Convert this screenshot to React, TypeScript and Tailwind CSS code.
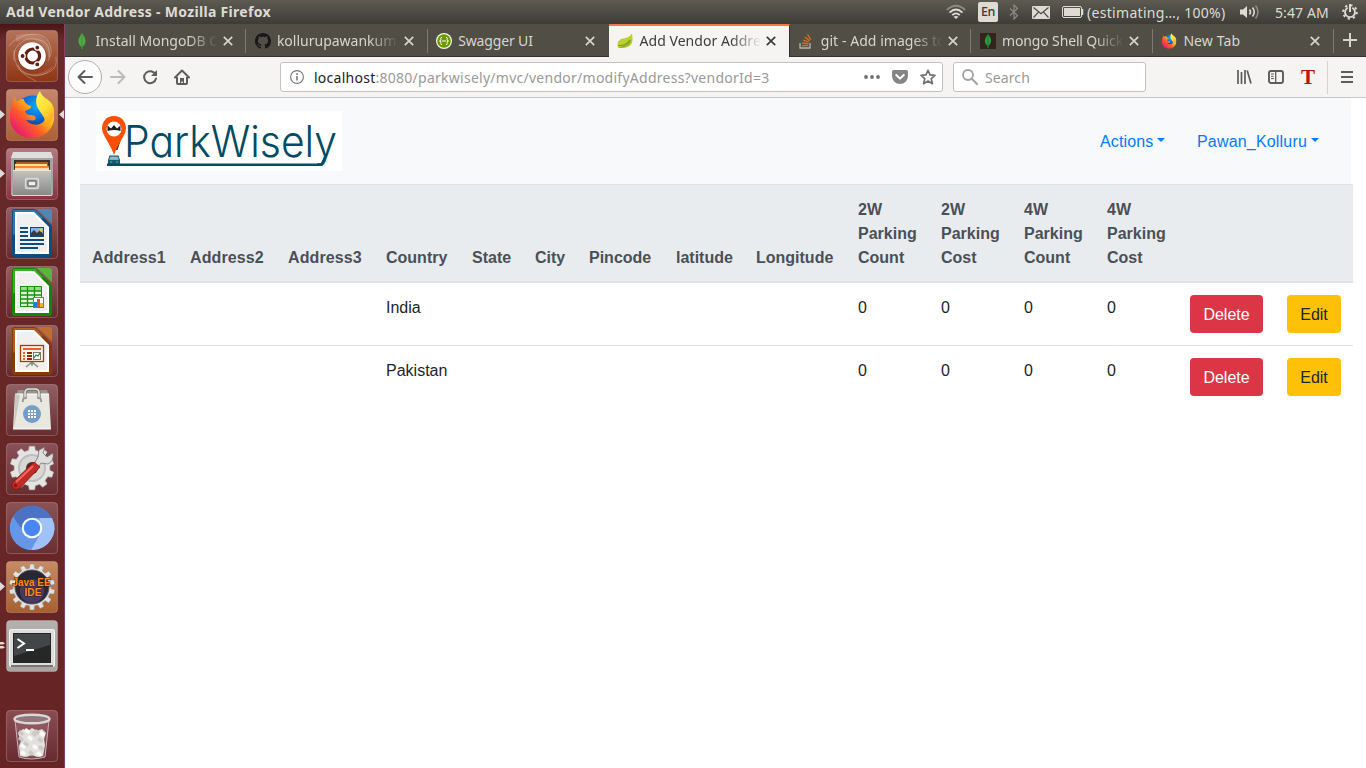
import React from "react";

/* ---------- small helpers ---------- */

function Tile({ from, to, children }: { from: string; to: string; children: React.ReactNode }) {
  const id = React.useId();
  return (
    <svg viewBox="0 0 52 52" className="block size-[52px]">
      <defs>
        <linearGradient id={id} x1="0" y1="0" x2="0" y2="1">
          <stop offset="0" stopColor={from} />
          <stop offset="1" stopColor={to} />
        </linearGradient>
      </defs>
      <rect x="0.5" y="0.5" width="51" height="51" rx="3.5" fill={`url(#${id})`} stroke="#ffffff" strokeOpacity="0.22" />
      {children}
    </svg>
  );
}

const gearPath = (cx: number, cy: number, r1: number, r2: number, teeth: number) => {
  const pts: string[] = [];
  const step = (Math.PI * 2) / teeth;
  for (let i = 0; i < teeth; i++) {
    const a = i * step - Math.PI / 2;
    [
      [r1, -0.3],
      [r2, -0.2],
      [r2, 0.2],
      [r1, 0.3],
    ].forEach(([r, o]) => pts.push(`${(cx + r * Math.cos(a + o * step)).toFixed(2)},${(cy + r * Math.sin(a + o * step)).toFixed(2)}`));
  }
  return `M${pts.join("L")}Z`;
};

/* ---------- launcher icons ---------- */

function DashIcon() {
  return (
    <Tile from="#b5735a" to="#8f3513">
      <g fill="none" stroke="#ffffff" strokeOpacity="0.28">
        <path d="M8 31C6 18 16 7 29 9S44 18 43 27" />
        <path d="M3 16C12 3 36 0 42 11S44 26 42 31" />
        <path d="M12 35C16 45 30 48 41 43S50 32 50 27" />
        <path d="M8 20C8 38 17 45 30 51" />
      </g>
      <path d="M10 5C36 0 48 12 43 30C41 12 26 5 10 12ZM8 31C15 46 31 49 48 35C42 50 14 52 8 31Z" fill="#fff" opacity=".13" />
      <circle cx="26" cy="26.5" r="14.3" fill="#5c1c08" opacity=".45" />
      <circle cx="26" cy="26" r="13.8" fill="#fff" />
      <circle cx="26.6" cy="26" r="7" fill="none" stroke="#622010" strokeWidth="3.2" />
      <g stroke="#fff" strokeWidth="1.3" fill="#622010">
        <circle cx="16.6" cy="26" r="2.6" />
        <circle cx="31.3" cy="17.6" r="2.6" />
        <circle cx="31.3" cy="34.4" r="2.6" />
      </g>
    </Tile>
  );
}

function FirefoxArt({ prefix }: { prefix: string }) {
  return (
    <>
      <defs>
        <linearGradient id={prefix + "a"} x1=".9" y1=".1" x2=".1" y2=".9">
          <stop offset="0" stopColor="#fff044" />
          <stop offset=".35" stopColor="#ffb51a" />
          <stop offset=".62" stopColor="#ff5a28" />
          <stop offset="1" stopColor="#e3127e" />
        </linearGradient>
        <radialGradient id={prefix + "b"} cx=".6" cy=".3" r=".7">
          <stop offset="0" stopColor="#12a9f8" />
          <stop offset=".55" stopColor="#0568d8" />
          <stop offset="1" stopColor="#271d75" />
        </radialGradient>
        <linearGradient id={prefix + "c"} x1=".2" y1="0" x2=".7" y2="1">
          <stop offset="0" stopColor="#fff44f" />
          <stop offset=".5" stopColor="#ffe135" />
          <stop offset="1" stopColor="#ff9a16" />
        </linearGradient>
      </defs>
      <circle cx="27" cy="24" r="17.5" fill={`url(#${prefix}b)`} />
      <path
        d="M9 7C9 10 10 12 11 13C13 11 15 10 18 10C18 13 21 16 25 17C26 19 22 21 19 22C20 25 22 26 25 26C29 26 31 29 29 31C27 32 23 31 20 31C24 36 33 38 38 32C41 26 39 18 35 12C43 13 49 21 48 30C47 41 37 49 26 49C13 49 3 39 4 27C4 19 7 14 9 7Z"
        fill={`url(#${prefix}a)`}
      />
      <path d="M34 2C29 8 29 15 33 21C37 27 41 31 39 38C47 33 51 23 46 15C43 10 35 8 34 2Z" fill={`url(#${prefix}c)`} />
    </>
  );
}

function FilesIcon() {
  return (
    <Tile from="#b37a83" to="#8a3340">
      <defs>
        <linearGradient id="fl" x1="0" y1="0" x2="0" y2="1">
          <stop offset="0" stopColor="#c4c4c2" />
          <stop offset="1" stopColor="#898986" />
        </linearGradient>
      </defs>
      <path d="M7 4H45L47 10V47H5V10Z" fill="#a5a5a3" />
      <path d="M7 4H45L47 10H5Z" fill="#dededc" />
      <rect x="8" y="12" width="36" height="15" fill="#3b3330" />
      <rect x="10" y="14" width="32" height="12" fill="#b85a22" />
      <path d="M9 16H41V18H9ZM9 20H43V22H9Z" fill="#ffdca4" />
      <rect x="9" y="18" width="34" height="2" fill="#ef8a39" />
      <path d="M7 22H45V47H7Z" fill="url(#fl)" />
      <path d="M7 22.5H45" stroke="#e7e7e5" />
      <path d="M6 47.5H46" stroke="#d7d7d5" />
      <rect x="19.5" y="30.5" width="13" height="10" rx="1.5" fill="#b4b4b1" stroke="#d9d9d7" strokeWidth="1.4" />
      <rect x="22" y="33" width="8" height="5" rx=".8" fill="#eee" stroke="#444" />
    </Tile>
  );
}

function DocIcon({ dark, light, children }: { dark: string; light: string; children: React.ReactNode }) {
  return (
    <Tile from="#945f60" to="#64292b">
      <path d="M9 2H29L46 19V47Q46 50 43 50H9Q6 50 6 47V5Q6 2 9 2Z" fill={dark} />
      <path d="M7 5Q7 3 9 3H29L37 11L7 28Z" fill={light} opacity=".65" />
      <path d="M9 5H28L43 20V47H9Z" fill="#fff" />
      <path d="M11 7H27L41 21V45H11Z" fill="#ececec" opacity=".8" />
      <path d="M31 2H43Q46 2 46 5V16.5Z" fill={light} opacity=".85" />
      {children}
    </Tile>
  );
}

function WriterIcon() {
  return (
    <DocIcon dark="#0b4f82" light="#4391c7">
      <path d="M14 21H22M14 25H22M14 29H22M14 33H38M14 37H38M14 41H32" stroke="#0d4c7c" strokeWidth="2" />
      <rect x="24.5" y="20.5" width="13" height="9" fill="#7fb8e6" stroke="#0d4c7c" />
      <path d="M25 29V26L28 23L31 26L34 23L37 27V29Z" fill="#353c3e" />
      <circle cx="35" cy="23" r="1.7" fill="#f1c830" />
    </DocIcon>
  );
}

function CalcIcon() {
  return (
    <DocIcon dark="#148606" light="#4dc737">
      <rect x="14.5" y="20.5" width="21" height="20" fill="#dff5da" stroke="#159208" />
      <rect x="15" y="21" width="20" height="4" fill="#98dc8a" />
      <path d="M14 25H36M14 29H36M14 33H36M14 37H36M21.5 20V41M28.5 20V41" stroke="#159208" strokeWidth="1.3" />
      <rect x="27.5" y="31.5" width="10" height="10" fill="#fff" stroke="#777" />
      <path d="M28 36H31V41H28Z" fill="#1782d2" />
      <path d="M31 33H34V41H31Z" fill="#d65a20" />
      <path d="M34 37H37V41H34Z" fill="#edb51d" />
    </DocIcon>
  );
}

function ImpressIcon() {
  return (
    <DocIcon dark="#873a06" light="#ca702b">
      <path d="M26 37L20 42M26 37L32 42M26 36V41" stroke="#8b8b88" strokeWidth="1.6" />
      <rect x="14.5" y="20.5" width="23" height="16" fill="#fff4eb" stroke="#a63c0a" strokeWidth="1.3" />
      <rect x="17" y="23" width="18" height="2" fill="#e1622c" />
      <path d="M17 28H19M17 31H19M17 34H19" stroke="#df6530" strokeWidth="1.8" />
      <path d="M21 28H26M21 31H26M21 34H26" stroke="#8d2e05" strokeWidth="1.8" />
      <rect x="27.5" y="27.5" width="7" height="7" fill="#fff" stroke="#777" />
      <path d="M28 33L30 30L32 31L34 28" stroke="#198c2a" fill="none" strokeWidth="1.2" />
    </DocIcon>
  );
}

function SoftwareIcon() {
  return (
    <Tile from="#916064" to="#672e31">
      <path d="M10 12L12 6H41L43 12Z" fill="#96948c" />
      <path d="M9 10H43L45 45H7Z" fill="#e8e8e1" />
      <path d="M9 10H43M7 45H45" stroke="#fff" />
      <path d="M9 10L14 11L8 44Z" fill="#c8c9c1" />
      <path d="M19 15V9Q19 5 23 5H29Q33 5 33 9V15" fill="none" stroke="#6b6b66" strokeWidth="3" />
      <path d="M19 15V9Q19 5 23 5H29Q33 5 33 9V15" fill="none" stroke="#e1e1da" strokeWidth="1.7" />
      <path d="M17 18Q16 14 20 14M35 18Q36 14 32 14" fill="none" stroke="#9a9a94" strokeWidth="2" />
      <circle cx="26" cy="30" r="9" fill="#769cca" />
      <path d="M22 26H24V28H22ZM25 26H27V28H25ZM28 26H30V28H28ZM22 29H24V31H22ZM25 29H27V31H25ZM28 29H30V31H28ZM22 32H24V34H22ZM25 32H27V34H25ZM28 32H30V34H28Z" fill="#fff" />
    </Tile>
  );
}

function SettingsIcon() {
  return (
    <Tile from="#895158" to="#692d30">
      <path d={gearPath(26, 25, 18, 22, 10)} fill="#e4e4e2" stroke="#b1b1af" strokeWidth=".6" />
      <circle cx="26" cy="25" r="13" fill="#d7d7d5" stroke="#bdbdbb" strokeWidth="2" />
      <circle cx="26" cy="25" r="6" fill="#5d282b" />
      <path d="M32 14L33 7L39 4L37 10L41 14L47 10Q48 18 42 21L35 20L31 26L27 23Z" fill="#dededd" stroke="#747474" strokeWidth=".8" />
      <path d="M28 19L34 24L14 45Q10 48 7 45Q4 42 8 38Z" fill="#c32b24" stroke="#7e1513" strokeWidth=".8" />
      <path d="M27 23L10 39" stroke="#ef6a61" strokeWidth="2" />
      <circle cx="9.5" cy="42.5" r="1.7" fill="#881713" />
    </Tile>
  );
}

function ChromiumIcon() {
  return (
    <Tile from="#8b5356" to="#6b2e31">
      <circle cx="26" cy="26" r="22" fill="#77a7f3" />
      <path d="M7 15A22 22 0 0 1 46 16H26L17 30Z" fill="#4c72c3" />
      <path d="M46 16A22 22 0 0 1 25 48L35 30L34 16Z" fill="#a0c2fa" />
      <path d="M7 15A22 22 0 0 0 25 48L34 32L18 30Z" fill="#6597e9" />
      <circle cx="26" cy="26" r="10.3" fill="#fff" />
      <circle cx="26" cy="26" r="8.2" fill="#4687f4" />
    </Tile>
  );
}

function EclipseIcon() {
  return (
    <Tile from="#c68c63" to="#a86030">
      <path d={gearPath(26, 26, 19, 23, 14)} fill="#e1e1df" stroke="#8f8b88" strokeWidth=".5" />
      <circle cx="26" cy="26" r="17" fill="#292734" stroke="#565563" />
      <circle cx="26" cy="30" r="12" fill="#463b65" />
      <g fontFamily="'Liberation Sans', sans-serif" fontWeight="700" fontSize="10" fill="#ff8b22" stroke="#3b1a08" strokeWidth="1" paintOrder="stroke">
        <text x="6.5" y="24.5" textLength="38" lengthAdjust="spacingAndGlyphs">Java EE</text>
        <text x="18.5" y="34.5" textLength="17" lengthAdjust="spacingAndGlyphs">IDE</text>
      </g>
    </Tile>
  );
}

function TerminalIcon() {
  return (
    <Tile from="#b4b0af" to="#aaa6a4">
      <rect x="3.5" y="9.5" width="45" height="37" rx="1.5" fill="#ddd" stroke="#f2f2f2" />
      <rect x="5" y="45" width="42" height="2" fill="#777" />
      <rect x="7" y="13" width="38" height="30" fill="#262828" />
      <path d="M8 14H44V25L8 36Z" fill="#505352" opacity=".7" />
      <path d="M11.5 19L18 23.5L11.5 28M20 30H28" fill="none" stroke="#fff" strokeWidth="2" />
    </Tile>
  );
}

function TrashIcon() {
  const bits = [[15, 23], [21, 21], [31, 22], [36, 24], [15, 29], [24, 28], [34, 30], [17, 36], [20, 34], [29, 37], [35, 38], [17, 43], [25, 43], [33, 44], [28, 24]];
  return (
    <Tile from="#8b4c54" to="#682a31">
      <path d="M9 10L13 47Q25 51 39 47L43 10" fill="#a88084" fillOpacity=".35" stroke="#c9b2b5" strokeWidth="1" />
      <path d="M12 23L17 19L22 21L26 18L31 21L36 19L40 23L38 29L39 35L37 46L31 47L26 45L20 47L14 46L13 36L15 31Z" fill="#e2e1dd" />
      {bits.map(([x, y], i) => (
        <path key={i} d={`M${x - 3} ${y}L${x - 1} ${y - 3}L${x + 2} ${y - 1}L${x + 3} ${y + 1}L${x + 1} ${y + 3}Z`} fill={i % 2 ? "#fafaf7" : "#cbcac5"} />
      ))}
      <ellipse cx="26" cy="9" rx="17.5" ry="4.3" fill="#92777a" stroke="#d9d9d7" strokeWidth="2.4" />
    </Tile>
  );
}

function Launcher() {
  const items = [
    <DashIcon />,
    <Tile from="#c6876d" to="#ad6034"><FirefoxArt prefix="ffl" /></Tile>,
    <FilesIcon />, <WriterIcon />, <CalcIcon />, <ImpressIcon />, <SoftwareIcon />, <SettingsIcon />, <ChromiumIcon />, <EclipseIcon />, <TerminalIcon />,
  ];
  const running = [1, 2, 9];
  return (
    <nav className="flex w-[65px] shrink-0 flex-col gap-[7px] border-r border-[#8a4164] bg-linear-to-b from-[#4a1512] via-[#67292a] via-2% to-[#682424] pt-[6px] pl-[6px]">
      {items.map((icon, i) => (
        <div key={i} className="relative size-[52px]">
          {icon}
          {running.includes(i) && (
            <svg className="absolute top-[21px] -left-[6px] h-[9px] w-[5px]" viewBox="0 0 5 9"><path d="M0 0L5 4.5L0 9Z" fill="#dedbd9" /></svg>
          )}
          {i === 1 && (
            <svg className="absolute top-[21px] left-[53px] h-[9px] w-[5px]" viewBox="0 0 5 9"><path d="M5 0L0 4.5L5 9Z" fill="#dedbd9" /></svg>
          )}
          {i === 10 && (
            <svg className="absolute top-[21px] -left-[6px] h-[9px] w-[5px]" viewBox="0 0 5 9"><path d="M0 1H3L5 2.2L3 3.4H0ZM0 5H3L5 6.2L3 7.4H0Z" fill="#dedbd9" /></svg>
          )}
        </div>
      ))}
      <div className="mt-[31px]"><TrashIcon /></div>
    </nav>
  );
}

/* ---------- top panel ---------- */

function TopPanel() {
  return (
    <header className="flex h-6 items-center bg-linear-to-b from-[#5d5b51] to-[#3d3c38] pl-[6px] text-[14px] whitespace-nowrap text-[#dfdbd2]">
      <h1 className="w-[940px] text-[14px] leading-6 font-bold tracking-[0.31px]">Add Vendor Address - Mozilla Firefox</h1>
      <svg className="h-[16px] w-[20px]" viewBox="0 0 20 16" fill="none" strokeWidth="1.8">
        <path d="M.8 6Q10-2.5 19.2 6" stroke="#8c8a82" />
        <path d="M3.5 8.6Q10 2.5 16.5 8.6M6.2 11.2Q10 7.6 13.8 11.2" stroke="#dfdbd2" />
        <path d="M7.5 12.8Q10 11 12.5 12.8L10 15Z" fill="#dfdbd2" />
      </svg>
      <span className="ml-[12px] flex h-[20px] w-[20px] items-center justify-center rounded-[2px] bg-[#dfdbd2] pt-px text-[12.5px] font-medium tracking-[-0.3px] text-[#3c3b37]">En</span>
      <svg className="ml-[11px] h-[16px] w-[10px]" viewBox="0 0 10 16" fill="none" stroke="#8c8a82" strokeWidth="1.2"><path d="M1 4.5L8.5 11.5L5 15V1L8.5 4.5L1 11.5" /></svg>
      <svg className="ml-[13px] h-[13px] w-[18px]" viewBox="0 0 18 13"><rect width="18" height="13" rx="1" fill="#dfdbd2" /><path d="M1.5 1.5L9 7.8L16.5 1.5M1.5 11.5L6.5 6.2M16.5 11.5L11.5 6.2" fill="none" stroke="#4b4a45" strokeWidth="1.2" /></svg>
      <svg className="ml-[12px] h-[12px] w-[22px]" viewBox="0 0 22 12"><rect x=".5" y=".5" width="19" height="11" rx="1.5" fill="none" stroke="#dfdbd2" /><rect x="2" y="2" width="16" height="8" fill="#dfdbd2" /><path d="M20.5 3V9" stroke="#dfdbd2" strokeWidth="1.6" /></svg>
      <span className="ml-[3px] w-[153px] tracking-[0.31px]">(estimating…, 100%)</span>
      <svg className="h-[16px] w-[20px]" viewBox="0 0 20 16" fill="none" strokeWidth="1.6" stroke="#dfdbd2">
        <path d="M0 5.5H3L7 2V14L3 10.5H0Z" fill="#dfdbd2" stroke="none" />
        <path d="M9.5 5.5Q11.5 8 9.5 10.5M12.5 3.5Q16 8 12.5 12.5" />
        <path d="M15.5 1.5Q20.5 8 15.5 14.5" stroke="#8c8a82" />
      </svg>
      <span className="ml-[15px] w-[67px] tracking-[0.1px]">5:47 AM</span>
      <svg className="h-[16px] w-[16px]" viewBox="0 0 16 16" fill="none" stroke="#dfdbd2">
        <circle cx="8" cy="8" r="6.8" strokeWidth="2" strokeDasharray="2.3 3.04" />
        <path d="M5.7 3.7A5 5 0 1 0 10.3 3.7" strokeWidth="1.8" />
        <path d="M8 0V8" strokeWidth="2" />
      </svg>
    </header>
  );
}

/* ---------- tabs ---------- */

const LeafDb = () => (
  <svg viewBox="0 0 16 16" className="size-4 shrink-0"><path d="M8 0Q12 5 11.5 9Q11 12.5 8.4 14V16H7.6V14Q5 12.5 4.5 9Q4 5 8 0Z" fill="#4faa41" /><path d="M8 1V16" stroke="#3b8a32" strokeWidth=".7" /></svg>
);
const GithubMark = () => (
  <svg viewBox="0 0 16 16" className="size-4 shrink-0"><path fill="#191717" d="M8 0C3.58 0 0 3.58 0 8c0 3.54 2.29 6.53 5.47 7.59.4.07.55-.17.55-.38 0-.19-.01-.82-.01-1.49-2.01.37-2.53-.49-2.69-.94-.09-.23-.48-.94-.82-1.13-.28-.15-.68-.52-.01-.53.63-.01 1.08.58 1.23.82.72 1.21 1.87.87 2.33.66.07-.52.28-.87.51-1.07-1.78-.2-3.64-.89-3.64-3.95 0-.87.31-1.59.82-2.15-.08-.2-.36-1.02.08-2.12 0 0 .67-.21 2.2.82.64-.18 1.32-.27 2-.27s1.36.09 2 .27c1.53-1.04 2.2-.82 2.2-.82.44 1.1.16 1.92.08 2.12.51.56.82 1.27.82 2.15 0 3.07-1.87 3.75-3.65 3.95.29.25.54.73.54 1.48 0 1.07-.01 1.93-.01 2.2 0 .21.15.46.55.38A8.01 8.01 0 0 0 16 8c0-4.42-3.58-8-8-8" /></svg>
);
const SwaggerMark = () => (
  <svg viewBox="0 0 16 16" className="size-4 shrink-0"><circle cx="8" cy="8" r="8" fill="#f3f8e8" /><circle cx="8" cy="8" r="6.8" fill="#6d9a00" /><path d="M6 4.3Q4.8 4.3 4.8 5.6V6.8Q4.8 8 3.5 8Q4.8 8 4.8 9.2V10.4Q4.8 11.7 6 11.7M10 4.3Q11.2 4.3 11.2 5.6V6.8Q11.2 8 12.5 8Q11.2 8 11.2 9.2V10.4Q11.2 11.7 10 11.7M6 8H10" fill="none" stroke="#fff" strokeWidth="1" /></svg>
);
const SpringLeaf = () => (
  <svg viewBox="0 0 16 16" className="size-4 shrink-0"><path d="M15 .5Q17 10 12.5 13Q8 16 1 14.5Q-1 9 4 6Q12 5 15 .5Z" fill="#bfd02b" /><path d="M14.5 6Q14 12 8 14Q4 15.4 1 14.5Q10 13.5 14.5 6Z" fill="#8dac2b" /><path d="M1.5 12.5Q9 13 13 7" fill="none" stroke="#6f922b" strokeWidth="1.1" /></svg>
);
const StackMark = () => (
  <svg viewBox="0 0 16 16" className="size-4 shrink-0" fill="none"><path d="M1 10V15H11V10" stroke="#b4b4ae" strokeWidth="1.3" /><path d="M3 12.7H9.3M3.2 10L9.4 10.9M4 7L9.8 9.2M5.8 4.1L10.7 7.8M8.5 1.5L11.8 6.7" stroke="#e36e1c" strokeWidth="1.3" /></svg>
);
const MongoSquare = () => (
  <svg viewBox="0 0 16 16" className="size-4 shrink-0"><rect width="16" height="16" fill="#34241b" /><path d="M8 1Q11.5 5 11 8.5Q10.5 11.5 8.4 13V15H7.6V13Q5 11.5 4.8 8Q4.8 5 8 1Z" fill="#2d9c43" /><path d="M8 2V14" stroke="#167632" /></svg>
);
const FirefoxSmall = () => (
  <svg viewBox="2 1 48 49" className="size-4 shrink-0"><FirefoxArt prefix="fft" /></svg>
);

const tabs = [
  { title: "Install MongoDB C", icon: LeafDb, fade: true, tracking: "tracking-[0px]" },
  { title: "kollurupawankum", icon: GithubMark, fade: true, tracking: "tracking-[0px]" },
  { title: "Swagger UI", icon: SwaggerMark, fade: false, tracking: "tracking-[-0.15px]" },
  { title: "Add Vendor Addre", icon: SpringLeaf, fade: true, tracking: "tracking-[0.05px]" },
  { title: "git - Add images to", icon: StackMark, fade: true, tracking: "tracking-[0.05px]" },
  { title: "mongo Shell Quick", icon: MongoSquare, fade: true, tracking: "tracking-[-0.15px]" },
  { title: "New Tab", icon: FirefoxSmall, fade: false, tracking: "tracking-[0.1px]" },
];

function TabStrip() {
  return (
    <div className="flex h-[33px] bg-[#504e45]">
      {tabs.map((t, i) => {
        const active = i === 3;
        const Icon = t.icon;
        return (
          <div key={t.title} className={`flex h-full w-[181.3px] shrink-0 items-center pl-[8.6px] ${active ? "border-t-2 border-r border-t-[#f07746] border-r-[#33322e] bg-[#f5f4f2] pb-[1px] text-[#3c3b37]" : "border-b border-[#33322e] pt-[1px] text-[#d9d5cc]"}`}>
            <Icon />
            <span className={`ml-[6px] w-[122px] shrink-0 text-[14px] leading-5 whitespace-nowrap ${t.tracking} ${t.fade ? "[mask-image:linear-gradient(to_right,black_92px,transparent_122px)]" : ""}`}>{t.title}</span>
            <svg className="ml-[5px] size-[10px] shrink-0" viewBox="0 0 10 10"><path d="M.8 .8L9.2 9.2M9.2 .8L.8 9.2" stroke="currentColor" strokeWidth="1.7" /></svg>
            {i !== 2 && !active && <span className="ml-auto h-6 w-px bg-[#7d7a70]" />}
          </div>
        );
      })}
      <div className="flex flex-1 items-center border-b border-[#33322e] pl-[9px]">
        <svg className="size-[14px]" viewBox="0 0 14 14"><path d="M7 0V14M0 7H14" stroke="#d9d5cc" strokeWidth="2" /></svg>
      </div>
    </div>
  );
}

/* ---------- toolbar ---------- */

function Toolbar() {
  return (
    <div className="flex h-[41px] items-center border-b border-[#c8c7c5] bg-[#f5f4f2] pl-[3px] text-[14px] text-[#5c5b57]">
      <span className="flex size-[34px] items-center justify-center rounded-full border border-[#b0afac] bg-[#fcfcfc]">
        <svg className="size-4" viewBox="0 0 16 16" fill="none" stroke="#5c5c5a" strokeWidth="2" strokeLinecap="round" strokeLinejoin="round"><path d="M15 8H1.5M7.5 2L1.5 8L7.5 14" /></svg>
      </span>
      <svg className="ml-2 size-4" viewBox="0 0 16 16" fill="none" stroke="#bababa" strokeWidth="2" strokeLinecap="round" strokeLinejoin="round"><path d="M1 8H14.5M8.5 2L14.5 8L8.5 14" /></svg>
      <svg className="ml-4 size-4" viewBox="0 0 16 16" fill="none" stroke="#5c5c5a" strokeWidth="2" strokeLinecap="round"><path d="M13.5 5.5A6 6 0 1 0 14 9.5" /><path d="M15 1V7H9Z" fill="#5c5c5a" stroke="none" /></svg>
      <svg className="ml-4 size-4" viewBox="0 0 16 16"><path d="M1 8.5L8 1.5L15 8.5" fill="none" stroke="#5c5c5a" strokeWidth="2" strokeLinecap="round" strokeLinejoin="round" /><path d="M3 8V14Q3 15 4 15H12Q13 15 13 14V8" fill="none" stroke="#5c5c5a" strokeWidth="2" /><path d="M6 15V9H10V15H8.8V12.5H7.2V15Z" fill="#5c5c5a" /></svg>
      <div className="ml-[90px] flex h-[30px] w-[663px] items-center rounded-[3px] border border-[#c2c1bf] bg-white pl-[9px]">
        <svg className="size-[14px] shrink-0" viewBox="0 0 14 14" fill="none" stroke="#777"><circle cx="7" cy="7" r="6.4" strokeWidth="1.1" /><path d="M7 6V10.5" strokeWidth="1.6" /><path d="M7 3.2V4.9" strokeWidth="1.6" /></svg>
        <span className="ml-[10px] w-[550px] tracking-[0.26px] text-[#999]"><span className="text-[#222]">localhost</span>:8080/parkwisely/mvc/vendor/modifyAddress?vendorId=3</span>
        <svg className="h-[16px] w-[16px]" viewBox="0 0 16 16" fill="#707070"><circle cx="2" cy="8" r="1.9" /><circle cx="8" cy="8" r="1.9" /><circle cx="14" cy="8" r="1.9" /></svg>
        <svg className="ml-[12px] size-4" viewBox="0 0 16 16"><path d="M1.5 1H14.5Q16 1 16 2.5V7A8 8 0 0 1 0 7V2.5Q0 1 1.5 1Z" fill="#858585" /><path d="M4.3 6L8 9.6L11.7 6" fill="none" stroke="#fff" strokeWidth="2" strokeLinecap="round" strokeLinejoin="round" /></svg>
        <svg className="ml-[12px] size-4" viewBox="0 0 16 16"><path d="M8 1.3L10 5.9L15 6.3L11.2 9.6L12.4 14.7L8 12L3.6 14.7L4.8 9.6L1 6.3L6 5.9Z" fill="none" stroke="#707070" strokeWidth="1.7" strokeLinejoin="round" /></svg>
      </div>
      <div className="ml-[10px] flex h-[30px] w-[193px] items-center rounded-[3px] border border-[#c2c1bf] bg-white pl-[8px]">
        <svg className="size-4" viewBox="0 0 16 16" fill="none" stroke="#a0a0a0"><circle cx="6" cy="6" r="5" strokeWidth="1.8" /><path d="M10 10L15 15" strokeWidth="2" strokeLinecap="round" /></svg>
        <span className="ml-[7px] tracking-[0.1px] text-[#999]">Search</span>
      </div>
      <svg className="ml-[90px] size-4" viewBox="0 0 16 16" stroke="#5c5c5a"><path d="M2 1V15M5.5 3V15M9 1V15M11.2 1.5L15 14.6" strokeWidth="1.7" /></svg>
      <svg className="ml-4 size-4" viewBox="0 0 16 16" fill="none" stroke="#5c5c5a"><rect x="1" y="2" width="14" height="12" rx="2" strokeWidth="1.9" /><path d="M7.7 2V14" strokeWidth="1.3" /><path d="M3 5H6M3 7.3H5.5M3 9.6H6" strokeWidth="1" /></svg>
      <span className="ml-[16px] w-[16px] text-center font-['Liberation_Serif',serif] text-[21px] leading-6 font-bold text-[#bd1111]">T</span>
      <span className="ml-[11px] h-[33px] w-px bg-[#d3d2d0]" />
      <svg className="ml-[13px] h-[14px] w-[12px]" viewBox="0 0 12 14" stroke="#5c5c5a" strokeWidth="1.8"><path d="M0 2H12M0 7H12M0 12H12" /></svg>
    </div>
  );
}

/* ---------- page ---------- */

function Logo() {
  return (
    <svg viewBox="0 0 246 60" className="block h-[60px] w-[246px] bg-white">
      <path d="M25 27L21 39L18 36Z" fill="#3b3d3f" stroke="#3b3d3f" />
      <path d="M18 5C10.5 5 6 10.5 6 17.5C6 24 14 32 18 44C22 32 30 24 30 17.5C30 10.5 25.5 5 18 5Z" fill="#fb5000" />
      <circle cx="18" cy="18" r="7.5" fill="#fff" />
      <path d="M11.5 20V14.5L15 17.5L18 14L21 17.5L24.5 14.5V20Q18 18 11.5 20Z" fill="#1e1e1e" />
      <path d="M13.5 44.5H22.5L24 49V55H12V49Z" fill="#185a72" />
      <path d="M14.5 46H21.5L22.5 48.5H13.5ZM14 51H16M20 51H22" fill="#9bbac4" stroke="#9bbac4" strokeWidth=".7" />
      <path d="M11 53.7H225.5L230 44" fill="none" stroke="#034a63" strokeWidth="2.4" />
      <text x="28" y="46" textLength="213" lengthAdjust="spacingAndGlyphs" className="[font-feature-settings:'cv11','ss03']" fontFamily="Inter, Lato, sans-serif" fontWeight="300" fontSize="44" fill="#034a63">ParkWisely</text>
    </svg>
  );
}

const Caret = () => <span className="border-x-[4.8px] border-t-[4.8px] border-x-transparent border-t-[#007bff] -mt-[3px]" />;

const columns = ["Address1", "Address2", "Address3", "Country", "State", "City", "Pincode", "latitude", "Longitude", "2W Parking Count", "2W Parking Cost", "4W Parking Count", "4W Parking Cost", "", ""];
const widths = [98, 98, 98, 86, 63, 54, 87, 80, 102, 83, 83, 83, 83, 97, 78];
const rows = ["India", "Pakistan"];

function Page() {
  return (
    <main className="min-h-0 flex-1 bg-white pl-[15px] font-['Liberation_Sans',sans-serif] text-[16px] leading-6 text-[#212529]">
      <div className="flex h-[86px] w-[1271px] items-center justify-between bg-[#f8f9fa] pr-8 pl-4">
        <Logo />
        <div className="flex gap-8 pt-px text-[#007bff]">
          <span className="flex w-[65px] items-center justify-between tracking-[0.12px]">Actions<Caret /></span>
          <span className="flex w-[122px] items-center justify-between tracking-[0.18px]">Pawan_Kolluru<Caret /></span>
        </div>
      </div>
      <table className="w-[1273px] table-fixed border-separate border-spacing-0 text-left">
        <colgroup>{widths.map((w, i) => <col key={i} style={{ width: w }} />)}</colgroup>
        <thead>
          <tr>
            {columns.map((c, i) => (
              <th key={i} className={`border-t border-b-2 border-[#dee2e6] bg-[#e9ecef] px-3 pt-[13px] pb-[11px] align-bottom font-bold text-[#495057] ${i < 3 ? "tracking-[0.1px]" : ""}`}>{c}</th>
            ))}
          </tr>
        </thead>
        <tbody>
          {rows.map((country, r) => (
            <tr key={country}>
              {columns.map((_, i) => (
                <td key={i} className={`px-3 align-top whitespace-nowrap ${i < 13 ? "pt-[13px] pb-[11px]" : "py-3"} ${r > 0 ? "border-t border-[#dee2e6]" : ""}`}>
                  {i === 3 && country}
                  {i >= 9 && i <= 12 && "0"}
                  {i === 13 && <button className="block h-[38px] w-[73px] rounded-[4px] bg-[#dc3545] pt-[2px] text-white">Delete</button>}
                  {i === 14 && <button className="block h-[38px] w-[54px] rounded-[4px] bg-[#ffc107] pt-[2px] text-[#212529]">Edit</button>}
                </td>
              ))}
            </tr>
          ))}
        </tbody>
      </table>
    </main>
  );
}

export default function App() {
  return (
    <div className="flex h-[768px] w-[1366px] flex-col overflow-hidden font-['Noto_Sans',sans-serif]">
      <TopPanel />
      <div className="flex min-h-0 flex-1">
        <Launcher />
        <div className="flex min-w-0 flex-1 flex-col">
          <TabStrip />
          <Toolbar />
          <Page />
        </div>
      </div>
    </div>
  );
}
